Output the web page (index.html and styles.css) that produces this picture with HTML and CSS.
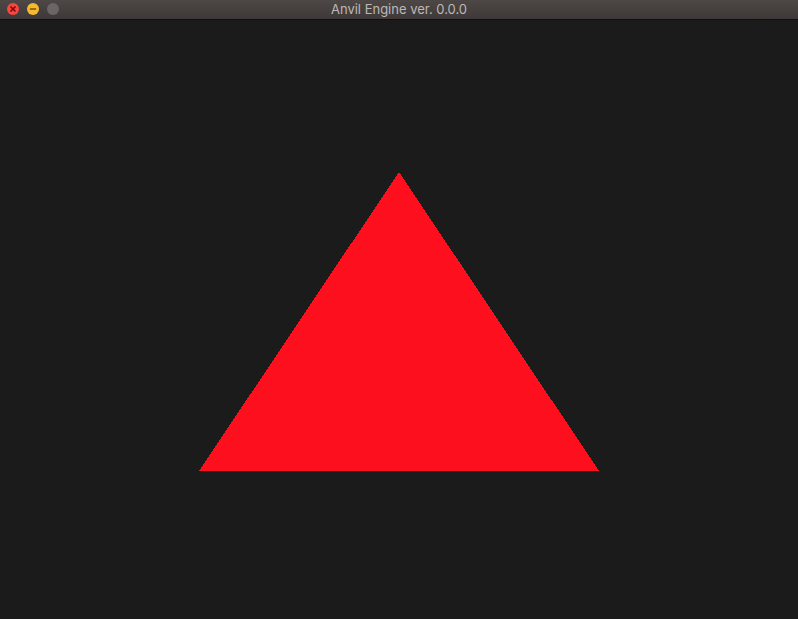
FILE: index.html
```html
<!DOCTYPE html>
<html>
<head>
<meta charset="utf-8">
<link rel="stylesheet" href="styles.css">
</head>
<body>
<div class="window">
  <div class="titlebar">
    <div class="lights">
      <span class="light close">
        <svg width="12" height="12" viewBox="0 0 12 12"><path d="M3.5 3.5 L8.5 8.5 M8.5 3.5 L3.5 8.5" stroke="#7e0508" stroke-width="1.6"/></svg>
      </span>
      <span class="light min">
        <svg width="12" height="12" viewBox="0 0 12 12"><path d="M2.8 6 H9.2" stroke="#8a5a00" stroke-width="1.6"/></svg>
      </span>
      <span class="light max"></span>
    </div>
    <div class="title">Anvil Engine ver. 0.0.0</div>
  </div>
  <div class="canvas">
    <svg class="scene" width="798" height="599" viewBox="0 0 798 599">
      <polygon points="399,152 599,451 199,451" fill="#fe0f1e" shape-rendering="crispEdges"/>
    </svg>
  </div>
</div>
</body>
</html>
```
FILE: styles.css
```css
html, body {
  margin: 0;
  padding: 0;
  background: #1b1b1b;
  overflow: hidden;
}
.window {
  width: 798px;
  height: 619px;
  display: flex;
  flex-direction: column;
}
.titlebar {
  height: 19px;
  border-bottom: 1px solid #0f0f0f;
  background: linear-gradient(#4d4746, #3e3938);
  position: relative;
  display: flex;
  align-items: center;
  justify-content: center;
  flex: none;
}
.lights {
  position: absolute;
  left: 7px;
  top: 3px;
  display: flex;
  gap: 8px;
}
.light {
  width: 12px;
  height: 12px;
  border-radius: 50%;
  display: block;
}
.light svg { display: block; }
.close { background: #f9463f; }
.min { background: #f7b92f; }
.max { background: #6a6666; }
.title {
  font-family: "Inter", "Liberation Sans", sans-serif;
  font-size: 13px;
  color: #bdb8b6;
  line-height: 19px;
}
.canvas {
  flex: 1;
  background: #1b1b1b;
}
.scene { display: block; }
```
